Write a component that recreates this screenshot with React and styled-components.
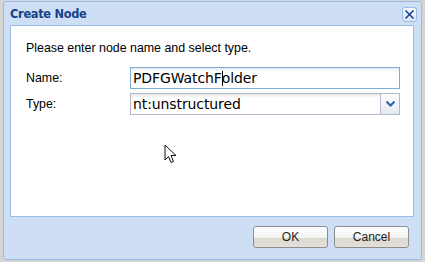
import React from 'react';
import styled, { createGlobalStyle } from 'styled-components';

const GlobalStyle = createGlobalStyle`
    html, body {
        margin: 0;
        padding: 0;
        background: #d4d4d4;
    }
    body {
        width: 425px;
        height: 262px;
        overflow: hidden;
        font-family: "Liberation Sans", Arial, sans-serif;
    }
`

export default function App() {
    return (
        <>
            <GlobalStyle />
            <Page>
                <Dialog>
                    <Header>
                        <Title>Create Node</Title>
                        <Close aria-label="close">
                            <svg width="11" height="11" viewBox="0 0 11 11">
                                <path d="M1.5 1.5 L9.5 9.5 M9.5 1.5 L1.5 9.5" stroke="#15428b" strokeWidth="1.6" />
                            </svg>
                        </Close>
                    </Header>
                    <Body>
                        <Intro>Please enter node name and select type.</Intro>
                        <Form>
                            <Label>Name:</Label>
                            <Field focused>
                                <Value>PDFGWatchF<Caret />older</Value>
                            </Field>
                            <Label>Type:</Label>
                            <Field>
                                <Value>nt:unstructured</Value>
                                <Trigger>
                                    <svg width="9" height="6" viewBox="0 0 9 6">
                                        <path d="M0.5 0.5 L4.5 4.5 L8.5 0.5" fill="none" stroke="#2a63b0" strokeWidth="2" />
                                    </svg>
                                </Trigger>
                            </Field>
                        </Form>
                        <Cursor width="14" height="22" viewBox="0 0 14 22">
                            <path d="M1 1 L1 16 L4.5 12.5 L7 18.5 L9.5 17.5 L7 11.5 L12 11.5 Z" fill="#fff" stroke="#111" strokeWidth="1" strokeLinejoin="round" />
                        </Cursor>
                    </Body>
                    <Footer>
                        <Button>OK</Button>
                        <Button>Cancel</Button>
                    </Footer>
                </Dialog>
            </Page>
        </>
    )
}

const Page = styled.div`
    width: 425px;
    height: 262px;
    padding: 1px 3px 2px 3px;
    box-sizing: border-box;
`

const Dialog = styled.div`
    height: 100%;
    box-sizing: border-box;
    border: 1px solid #99bbe8;
    border-radius: 3px;
    background: #cedff5;
    display: flex;
    flex-direction: column;
    padding: 0 7px 0 6px;
`

const Header = styled.div`
    height: 23px;
    display: flex;
    align-items: center;
    justify-content: space-between;
    margin-right: -3px;
`

const Title = styled.span`
    font-family: "DejaVu Sans", sans-serif;
    font-size: 11.4px;
    font-weight: bold;
    color: #15428b;
    margin-top: 1px;
    letter-spacing: -0.3px;
`

const Close = styled.div`
    width: 15px;
    height: 15px;
    box-sizing: border-box;
    border: 1px solid #99bbe8;
    border-radius: 3px;
    background: linear-gradient(#f4f8fd, #dbe7f6);
    display: flex;
    align-items: center;
    justify-content: center;
    margin-top: 2px;
`

const Body = styled.div`
    position: relative;
    height: 192px;
    box-sizing: border-box;
    background: #fff;
    border: 1px solid #99bbe8;
    padding: 14px 0 0 15px;
    font-size: 12.4px;
    color: #000;
`

const Intro = styled.div`
    line-height: 16px;
`

const Form = styled.div`
    display: grid;
    grid-template-columns: 104px 270px;
    row-gap: 4px;
    margin-top: 11px;
    align-items: center;
`

const Label = styled.span`
    line-height: 16px;
`

const Field = styled.div`
    height: 22px;
    box-sizing: border-box;
    border: 1px solid ${p => p.focused ? '#7eadd9' : '#b5b8c8'};
    background: linear-gradient(#e9e9e9, #fff 4px);
    display: flex;
    align-items: center;
    justify-content: space-between;
    position: relative;
`

const Value = styled.span`
    padding-left: 2px;
    font-family: "DejaVu Sans", sans-serif;
    font-size: 14px;
    letter-spacing: -0.1px;
    display: flex;
    align-items: center;
`

const Caret = styled.span`
    width: 1px;
    height: 15px;
    margin-right: -1px;
    background: #000;
`

const Trigger = styled.div`
    width: 18px;
    height: 20px;
    border-left: 1px solid #b5b8c8;
    background: linear-gradient(#fdfdfd, #e4e9f2);
    display: flex;
    align-items: center;
    justify-content: center;
`

const Cursor = styled.svg`
    position: absolute;
    left: 153px;
    top: 118px;
`

const Footer = styled.div`
    flex: 1;
    display: flex;
    justify-content: flex-end;
    gap: 6px;
    padding: 9px 5px 0 0;
    box-sizing: border-box;
`

const Button = styled.div`
    width: 75px;
    height: 22px;
    box-sizing: border-box;
    border: 1px solid #8d8d8d;
    border-radius: 3px;
    background: linear-gradient(#fff, #f2f2f2 55%, #dcd8d0 56%, #e5e1da);
    font-size: 12px;
    display: flex;
    align-items: center;
    justify-content: center;
    color: #222;
`
